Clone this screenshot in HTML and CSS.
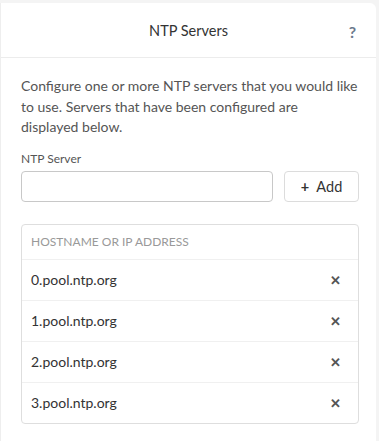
FILE: index.html
```html
<!DOCTYPE html>
<html lang="en">
<head>
  <meta charset="UTF-8" />
  <title>NTP Servers</title>
  <link rel="stylesheet" href="styles.css">
</head>
<body>

  <div class="panel">
    <header>
      <h1>NTP Servers</h1>
      <span class="help">?</span>
    </header>

    <div class="content">
      <p class="intro">Configure one or more NTP servers that you would like to use. Servers that have been configured are displayed below.</p>

      <label for="ntpServer">NTP Server</label>
      <div class="add-row">
        <input type="text" id="ntpServer" />
        <button class="add-btn"><span class="plus">+</span> Add</button>
      </div>

      <div class="servers">
        <div class="servers-head">Hostname or IP address</div>
        <div class="server">
          <span>0.pool.ntp.org</span>
          <span class="remove">&#10005;</span>
        </div>
        <div class="server">
          <span>1.pool.ntp.org</span>
          <span class="remove">&#10005;</span>
        </div>
        <div class="server">
          <span>2.pool.ntp.org</span>
          <span class="remove">&#10005;</span>
        </div>
        <div class="server">
          <span>3.pool.ntp.org</span>
          <span class="remove">&#10005;</span>
        </div>
      </div>
    </div>
  </div>

</body>
</html>
```

FILE: styles.css
```css
body {
  font-family: Lato, "Open Sans", sans-serif;
  margin: 0;
  background: #f4f4f4;
  color: #333;
  padding-top: 3px;
  padding-right: 3px;
}
.panel {
  background: white;
  border-left: 1px solid #eeeeee;
  border-radius: 0 6px 0 0;
  min-height: 438px;
}
header {
  height: 54px;
  border-bottom: 1px solid #ececec;
  display: flex;
  align-items: center;
  justify-content: center;
  position: relative;
}
header h1 {
  margin: 0;
  font-size: 14.5px;
  font-weight: normal;
  color: #333;
}
.help {
  position: absolute;
  right: 20px;
  top: 19px;
  font-size: 16px;
  font-weight: bold;
  color: #6b7a8c;
}
.content {
  padding: 18px 17px 0 20px;
}
.intro {
  margin: 0;
  max-width: 336.5px;
  font-size: 14px;
  line-height: 20.5px;
  color: #555;
}
label {
  display: block;
  margin-top: 13px;
  font-size: 12px;
  color: #555;
}
.add-row {
  display: flex;
  gap: 11px;
  margin-top: 5px;
}
.add-row input {
  flex: 1;
  height: 31px;
  box-sizing: border-box;
  border: 1px solid #c8c8c8;
  border-radius: 4px;
}
.add-btn {
  width: 75px;
  height: 31px;
  background: white;
  border: 1px solid #dcdcdc;
  border-radius: 4px;
  font-family: inherit;
  font-size: 14.5px;
  color: #333;
}
.plus {
  font-weight: bold;
  margin-right: 4px;
}
.servers {
  margin-top: 22px;
  border: 1px solid #dedede;
  border-radius: 4px;
}
.servers-head {
  height: 34px;
  display: flex;
  align-items: center;
  padding-left: 9px;
  font-size: 12px;
  text-transform: uppercase;
  color: #999;
  border-bottom: 1px solid #f0f0f0;
}
.server {
  height: 40px;
  display: flex;
  align-items: center;
  justify-content: space-between;
  padding: 0 17px 0 9px;
  font-size: 14px;
  color: #333;
  border-bottom: 1px solid #f0f0f0;
}
.server:last-child {
  border-bottom: none;
}
.remove {
  font-size: 13px;
  font-weight: bold;
  color: #555;
}
```
